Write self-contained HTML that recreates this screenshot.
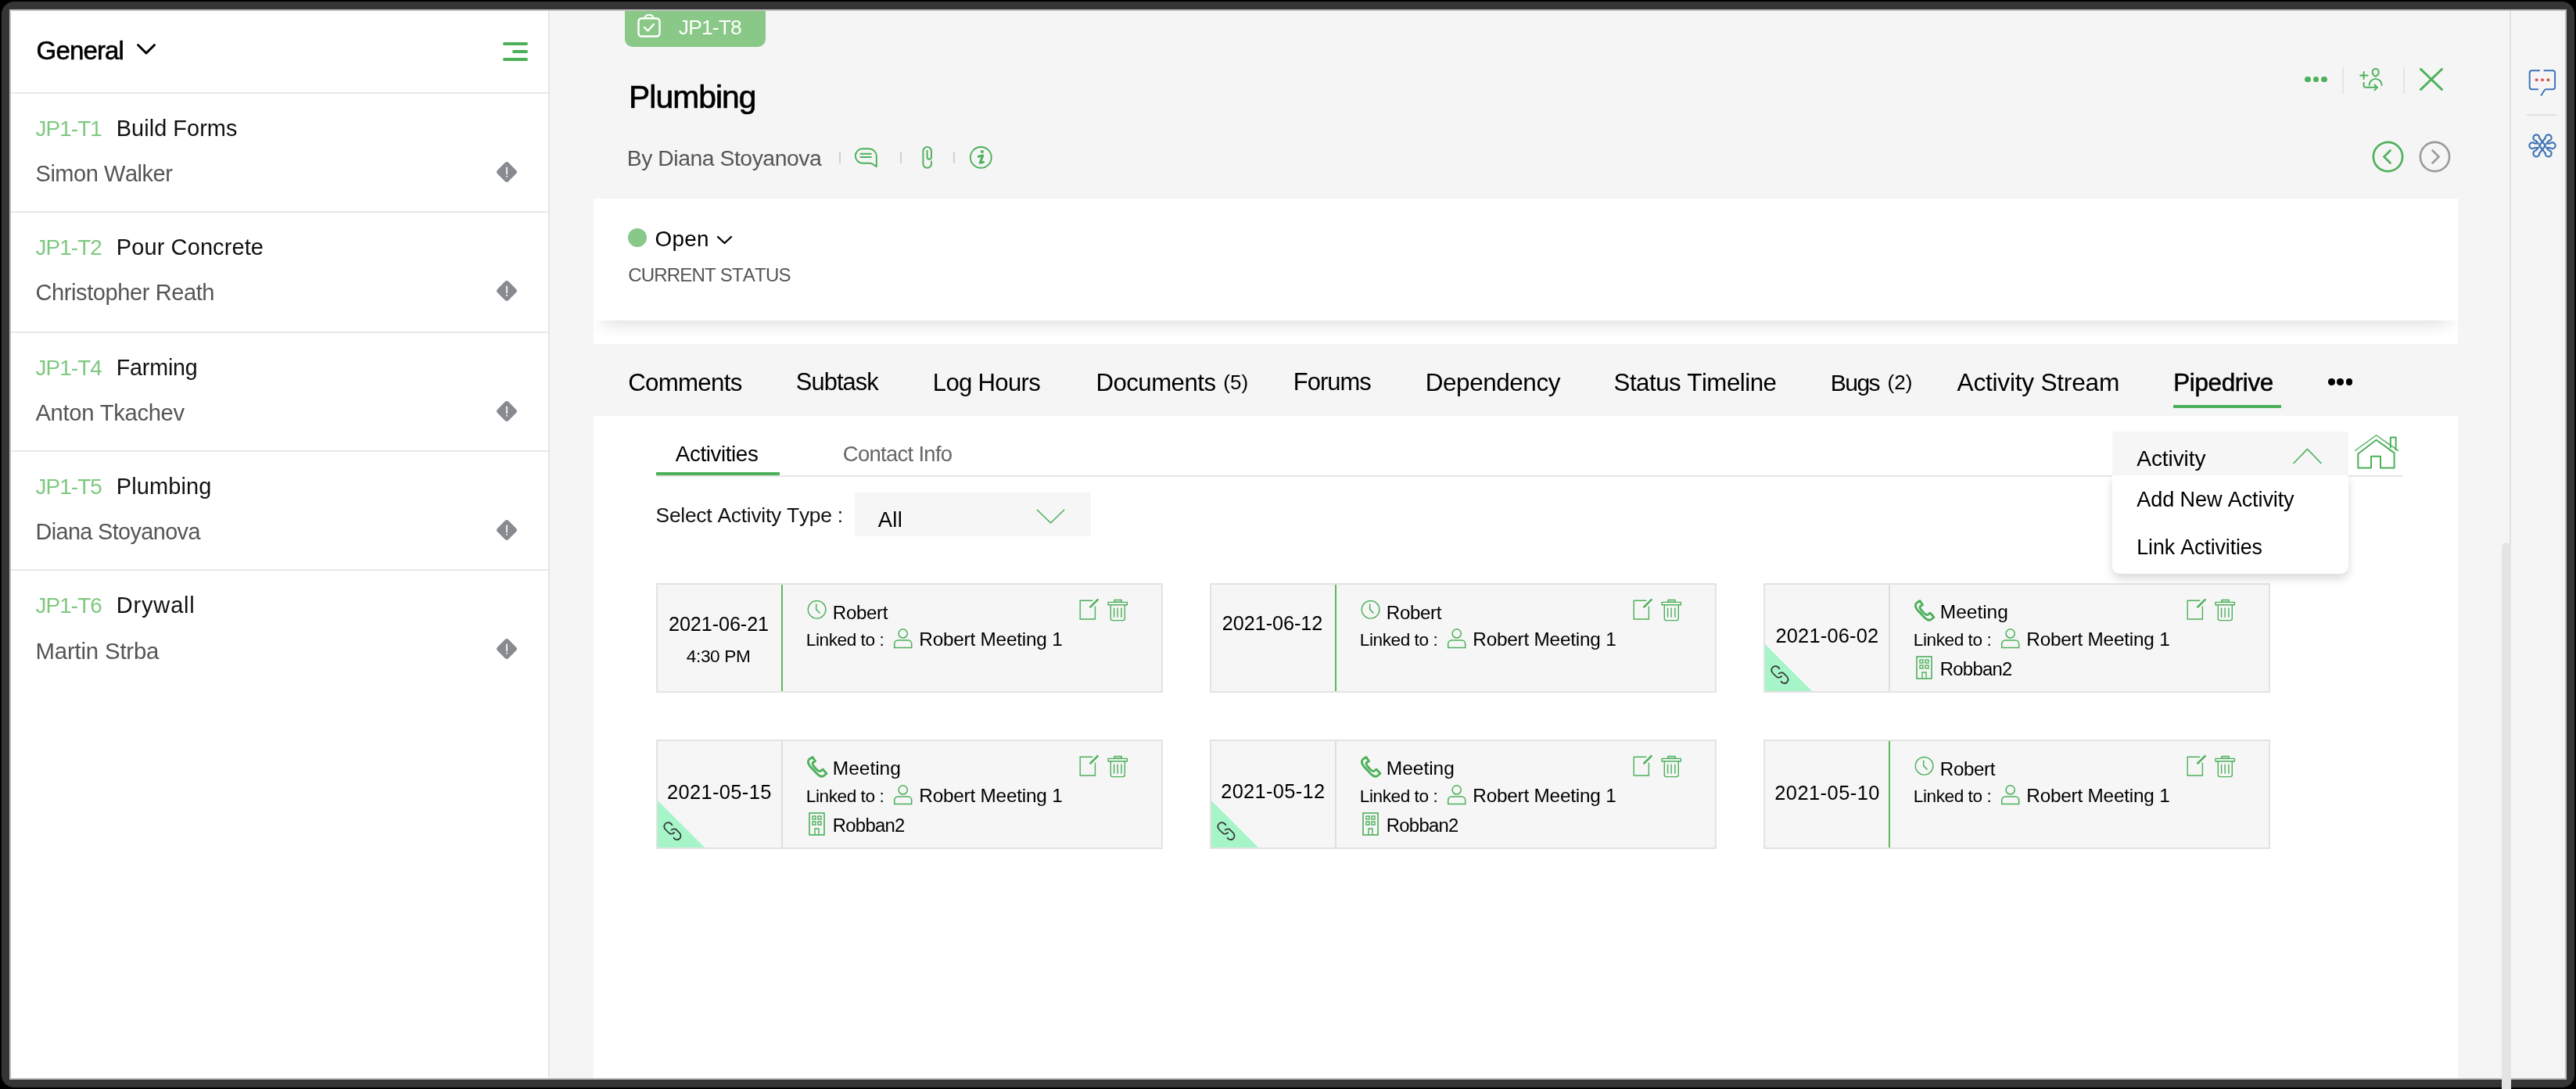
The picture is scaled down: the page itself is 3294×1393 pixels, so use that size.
<!DOCTYPE html>
<html><head><meta charset="utf-8"><style>
html,body{margin:0;padding:0;width:3294px;height:1393px;overflow:hidden;background:#000;}
body{position:relative;font-family:"Liberation Sans",sans-serif;}
.t{position:absolute;white-space:nowrap;font-kerning:none;font-family:"Liberation Sans",sans-serif;-webkit-font-smoothing:antialiased;}
#root{position:absolute;left:0;top:0;width:3294px;height:1393px;will-change:transform;}
svg{display:block}
</style></head><body><div id="root">
<div style="position:absolute;left:0;top:0;width:3294px;height:1393px;background:#000;"></div>
<div style="position:absolute;left:2px;top:2px;width:3290px;height:1389px;background:#353535;border-radius:16px;"></div>
<div style="position:absolute;left:12px;top:12px;width:3270px;height:1369px;background:#bfbfbf;"></div>
<div style="position:absolute;left:14px;top:14px;width:3266px;height:1365px;background:#f5f5f5;overflow:hidden;"></div>
<div style="position:absolute;left:14px;top:14px;width:687px;height:1365px;background:#fff;"></div>
<div style="position:absolute;left:701px;top:14px;width:2px;height:1365px;background:#e6e6e6;"></div>
<div style="position:absolute;left:14px;top:118px;width:687px;height:2px;background:#e8e8e8;"></div>
<div style="position:absolute;left:14px;top:270px;width:687px;height:2px;background:#e8e8e8;"></div>
<div style="position:absolute;left:14px;top:424px;width:687px;height:2px;background:#e8e8e8;"></div>
<div style="position:absolute;left:14px;top:576px;width:687px;height:2px;background:#e8e8e8;"></div>
<div style="position:absolute;left:14px;top:728px;width:687px;height:2px;background:#e8e8e8;"></div>
<div class="t" style="left:46.60px;top:47.62px;font-size:33.05px;line-height:33.05px;color:#000;letter-spacing:-0.883px;-webkit-text-stroke:0.6px #000;">General</div>
<svg style="position:absolute;left:175px;top:56px;overflow:visible" width="24" height="14" viewBox="0 0 24 14"><polyline points="1.5,1.5 12,12 22.5,1.5" fill="none" stroke="#000" stroke-width="3" stroke-linecap="round" stroke-linejoin="round"/></svg>
<div style="position:absolute;left:643px;top:53.8px;width:32px;height:4px;border-radius:2px;background:#4cb05a;"></div>
<div style="position:absolute;left:655px;top:63.900000000000006px;width:20px;height:4px;border-radius:2px;background:#4cb05a;"></div>
<div style="position:absolute;left:643px;top:73.8px;width:32px;height:4px;border-radius:2px;background:#4cb05a;"></div>
<div class="t" style="left:45.50px;top:150.64px;font-size:27.83px;line-height:27.83px;color:#7fc882;letter-spacing:-0.877px;">JP1-T1</div>
<div class="t" style="left:148.80px;top:149.71px;font-size:28.92px;line-height:28.92px;color:#111;letter-spacing:0.039px;">Build Forms</div>
<div class="t" style="left:45.50px;top:207.82px;font-size:29.03px;line-height:29.03px;color:#555;letter-spacing:-0.467px;">Simon Walker</div>
<svg style="position:absolute;left:635px;top:207.4px;overflow:visible" width="26" height="26" viewBox="0 0 26 26"><rect x="3" y="3" width="20" height="20" rx="3.2" transform="rotate(45 13 13)" fill="#878b8f"/><rect x="12.2" y="6.5" width="1.7" height="10" rx="0.8" fill="#fff"/><circle cx="13.05" cy="18.8" r="1" fill="#fff"/></svg>
<div class="t" style="left:45.50px;top:302.64px;font-size:27.83px;line-height:27.83px;color:#7fc882;letter-spacing:-0.877px;">JP1-T2</div>
<div class="t" style="left:148.80px;top:301.65px;font-size:29.00px;line-height:29.00px;color:#111;letter-spacing:0.101px;">Pour Concrete</div>
<div class="t" style="left:45.50px;top:359.79px;font-size:29.06px;line-height:29.06px;color:#555;letter-spacing:-0.421px;">Christopher Reath</div>
<svg style="position:absolute;left:635px;top:359.4px;overflow:visible" width="26" height="26" viewBox="0 0 26 26"><rect x="3" y="3" width="20" height="20" rx="3.2" transform="rotate(45 13 13)" fill="#878b8f"/><rect x="12.2" y="6.5" width="1.7" height="10" rx="0.8" fill="#fff"/><circle cx="13.05" cy="18.8" r="1" fill="#fff"/></svg>
<div class="t" style="left:45.50px;top:456.64px;font-size:27.83px;line-height:27.83px;color:#7fc882;letter-spacing:-0.877px;">JP1-T4</div>
<div class="t" style="left:148.80px;top:455.96px;font-size:28.63px;line-height:28.63px;color:#111;letter-spacing:-0.168px;">Farming</div>
<div class="t" style="left:45.50px;top:513.69px;font-size:29.19px;line-height:29.19px;color:#555;letter-spacing:-0.346px;">Anton Tkachev</div>
<svg style="position:absolute;left:635px;top:513.4px;overflow:visible" width="26" height="26" viewBox="0 0 26 26"><rect x="3" y="3" width="20" height="20" rx="3.2" transform="rotate(45 13 13)" fill="#878b8f"/><rect x="12.2" y="6.5" width="1.7" height="10" rx="0.8" fill="#fff"/><circle cx="13.05" cy="18.8" r="1" fill="#fff"/></svg>
<div class="t" style="left:45.50px;top:608.64px;font-size:27.83px;line-height:27.83px;color:#7fc882;letter-spacing:-0.877px;">JP1-T5</div>
<div class="t" style="left:148.80px;top:607.66px;font-size:28.98px;line-height:28.98px;color:#111;letter-spacing:0.126px;">Plumbing</div>
<div class="t" style="left:45.50px;top:665.98px;font-size:28.84px;line-height:28.84px;color:#555;letter-spacing:-0.618px;">Diana Stoyanova</div>
<svg style="position:absolute;left:635px;top:665.4px;overflow:visible" width="26" height="26" viewBox="0 0 26 26"><rect x="3" y="3" width="20" height="20" rx="3.2" transform="rotate(45 13 13)" fill="#878b8f"/><rect x="12.2" y="6.5" width="1.7" height="10" rx="0.8" fill="#fff"/><circle cx="13.05" cy="18.8" r="1" fill="#fff"/></svg>
<div class="t" style="left:45.50px;top:760.64px;font-size:27.83px;line-height:27.83px;color:#7fc882;letter-spacing:-0.877px;">JP1-T6</div>
<div class="t" style="left:148.80px;top:759.65px;font-size:29.00px;line-height:29.00px;color:#111;letter-spacing:0.823px;">Drywall</div>
<div class="t" style="left:45.50px;top:817.55px;font-size:29.35px;line-height:29.35px;color:#555;letter-spacing:-0.172px;">Martin Strba</div>
<svg style="position:absolute;left:635px;top:817.4px;overflow:visible" width="26" height="26" viewBox="0 0 26 26"><rect x="3" y="3" width="20" height="20" rx="3.2" transform="rotate(45 13 13)" fill="#878b8f"/><rect x="12.2" y="6.5" width="1.7" height="10" rx="0.8" fill="#fff"/><circle cx="13.05" cy="18.8" r="1" fill="#fff"/></svg>
<div style="position:absolute;left:799px;top:14px;width:180px;height:45.5px;background:#89c886;border-radius:0 0 10px 10px;"></div>
<svg style="position:absolute;left:815px;top:19px;overflow:visible" width="30" height="29" viewBox="0 0 30 29"><rect x="1.5" y="4.5" width="27" height="23" rx="4" fill="none" stroke="#fff" stroke-width="2.4"/><path d="M10 5 V3 a5 3 0 0 1 10 0 V5" fill="none" stroke="#fff" stroke-width="2.2"/><polyline points="9,16 13.5,20.5 21,12" fill="none" stroke="#fff" stroke-width="2.4" stroke-linecap="round" stroke-linejoin="round"/></svg>
<div class="t" style="left:867.80px;top:22.02px;font-size:26.44px;line-height:26.44px;color:#fff;letter-spacing:-0.841px;">JP1-T8</div>
<div class="t" style="left:804.10px;top:104.29px;font-size:40.75px;line-height:40.75px;color:#000;letter-spacing:-0.929px;-webkit-text-stroke:0.7px #000;">Plumbing</div>
<div class="t" style="left:801.80px;top:188.41px;font-size:28.34px;line-height:28.34px;color:#555;letter-spacing:-0.457px;">By Diana Stoyanova</div>
<div style="position:absolute;left:1073px;top:194px;width:2px;height:15px;background:#d0d0d0;"></div>
<div style="position:absolute;left:1151px;top:194px;width:2px;height:15px;background:#d0d0d0;"></div>
<div style="position:absolute;left:1219px;top:194px;width:2px;height:15px;background:#d0d0d0;"></div>
<svg style="position:absolute;left:1093px;top:189px;overflow:visible" width="30" height="27" viewBox="0 0 30 27"><path d="M10 1.3 H18.3 A9.5 9.5 0 0 1 27.8 10.8 V24.3 L22.8 20.7 Q21.3 19.7 18.8 19.7 H10 A9.2 9.2 0 0 1 10 1.3 Z" fill="none" stroke="#4cb05a" stroke-width="1.9" stroke-linejoin="round"/><line x1="7.4" y1="7.7" x2="20.8" y2="7.7" stroke="#4cb05a" stroke-width="2.1" stroke-linecap="round"/><line x1="7.4" y1="12" x2="20.8" y2="12" stroke="#4cb05a" stroke-width="2.1" stroke-linecap="round"/></svg>
<svg style="position:absolute;left:1178px;top:186px;overflow:visible" width="16" height="31" viewBox="0 0 16 31"><path d="M7.6 6.8 V15 A2.7 2.7 0 0 0 13 15 V7.2 A5.3 5.3 0 0 0 2.4 7.2 V23.5 A5.3 5.3 0 0 0 13 23.5 V20.4" fill="none" stroke="#4cb05a" stroke-width="1.9" stroke-linecap="round"/></svg>
<svg style="position:absolute;left:1240px;top:187px;overflow:visible" width="29" height="29" viewBox="0 0 29 29"><circle cx="14.3" cy="14.4" r="13.4" fill="none" stroke="#4cb05a" stroke-width="1.9"/><circle cx="15.9" cy="7" r="2.1" fill="#4cb05a"/><path d="M11.3 13.4 Q14 12 16.8 11.9 L13.2 21.3 Q15.5 21.2 17.6 20.2" fill="none" stroke="#4cb05a" stroke-width="2.9" stroke-linejoin="round" stroke-linecap="round"/></svg>
<div style="position:absolute;left:2947.0px;top:97.5px;width:7.5px;height:7.5px;border-radius:50%;background:#4cb05a;"></div>
<div style="position:absolute;left:2957.6px;top:97.5px;width:7.5px;height:7.5px;border-radius:50%;background:#4cb05a;"></div>
<div style="position:absolute;left:2968.2px;top:97.5px;width:7.5px;height:7.5px;border-radius:50%;background:#4cb05a;"></div>
<div style="position:absolute;left:2995px;top:86px;width:2px;height:34px;background:#e4e4e4;"></div>
<div style="position:absolute;left:3073px;top:86px;width:2px;height:34px;background:#e4e4e4;"></div>
<svg style="position:absolute;left:3017px;top:87px;overflow:visible" width="30" height="30" viewBox="0 0 30 30"><g fill="none" stroke="#4cb05a" stroke-width="1.9" stroke-linecap="round" stroke-linejoin="round"><line x1="1.1" y1="9.5" x2="10.6" y2="9.5"/><line x1="5.6" y1="5" x2="5.6" y2="14.1"/><path d="M20.7 1 C23.5 1 25 3 24.8 5.3 C24.6 7.8 22.5 10.5 20.7 10.7 C18.9 10.5 16.8 7.8 16.6 5.3 C16.4 3 17.9 1 20.7 1 Z"/><path d="M12.6 21.9 A8 8 0 0 1 28.7 21.9"/><path d="M5.6 18.6 V22.6 Q5.6 24.8 7.9 24.8 H22.8"/><polyline points="19.4,21.5 22.8,24.8 19.4,28.3"/></g></svg>
<svg style="position:absolute;left:3094px;top:87px;overflow:visible" width="30" height="29" viewBox="0 0 30 29"><g stroke="#4cb05a" stroke-width="3" stroke-linecap="round"><line x1="1.5" y1="1.5" x2="28.5" y2="27.5"/><line x1="28.5" y1="1.5" x2="1.5" y2="27.5"/></g></svg>
<svg style="position:absolute;left:3033px;top:180px;overflow:visible" width="41" height="41" viewBox="0 0 41 41"><circle cx="20.5" cy="20.5" r="18.6" fill="none" stroke="#4cb05a" stroke-width="2.6"/><polyline points="23.5,12.5 15.5,20.5 23.5,28.5" fill="none" stroke="#4cb05a" stroke-width="2.6" stroke-linecap="round"/></svg>
<svg style="position:absolute;left:3093px;top:180px;overflow:visible" width="41" height="41" viewBox="0 0 41 41"><circle cx="20.5" cy="20.5" r="18.6" fill="none" stroke="#9a9a9a" stroke-width="2.6"/><polyline points="17.5,12.5 25.5,20.5 17.5,28.5" fill="none" stroke="#9a9a9a" stroke-width="2.6" stroke-linecap="round"/></svg>
<div style="position:absolute;left:3209px;top:14px;width:2px;height:1365px;background:#e2e2e2;"></div>
<div style="position:absolute;left:3199px;top:694px;width:12px;height:700px;background:#e4e4e4;border-radius:6px 6px 0 0;"></div>
<svg style="position:absolute;left:3233px;top:89px;overflow:visible" width="36" height="34" viewBox="0 0 36 34"><g fill="none" stroke="#3f74b5" stroke-width="2" stroke-linecap="round" stroke-linejoin="round"><path d="M14.1 1.3 H4.7 Q1.7 1.3 1.7 4.3 V22.2 Q1.7 25.2 4.7 25.2 H12"/><path d="M20.5 1.3 H31.1 Q34.1 1.3 34.1 4.3 V22.2 Q34.1 25.2 31.1 25.2 H22.5 Q21.5 25.2 20.8 26.3 L16.6 32.7"/></g><circle cx="10.6" cy="13.2" r="1.9" fill="#dd4646"/><circle cx="18" cy="13.2" r="1.9" fill="#dd4646"/><circle cx="25.4" cy="13.2" r="1.9" fill="#dd4646"/></svg>
<div style="position:absolute;left:3231px;top:146px;width:38px;height:2px;background:#e0e0e0;"></div>
<svg style="position:absolute;left:3233px;top:171px;overflow:visible" width="36" height="31" viewBox="0 0 36 31"><defs><mask id="fa" maskUnits="userSpaceOnUse" x="-5" y="-5" width="46" height="41"><rect x="-5" y="-5" width="46" height="41" fill="black"/><circle cx="10.3" cy="5.2" r="5.0" fill="white"/><circle cx="10.3" cy="25.4" r="5.0" fill="white"/><circle cx="5.3" cy="15.3" r="5.0" fill="white"/><polyline points="10.3,5.2 18.4,15.3 10.3,25.4" fill="none" stroke="white" stroke-width="7.8" stroke-linejoin="miter"/><line x1="5.3" y1="15.3" x2="14" y2="15.3" stroke="white" stroke-width="7.8"/><circle cx="10.3" cy="5.2" r="2.8" fill="black"/><circle cx="10.3" cy="25.4" r="2.8" fill="black"/><circle cx="5.3" cy="15.3" r="2.8" fill="black"/><polyline points="10.3,5.2 18.4,15.3 10.3,25.4" fill="none" stroke="black" stroke-width="3.4" stroke-linejoin="miter"/><line x1="5.3" y1="15.3" x2="14" y2="15.3" stroke="black" stroke-width="3.4"/></mask><mask id="fb" maskUnits="userSpaceOnUse" x="-5" y="-5" width="46" height="41"><rect x="-5" y="-5" width="46" height="41" fill="black"/><g transform="translate(36,0) scale(-1,1)"><circle cx="10.3" cy="5.2" r="5.0" fill="white"/><circle cx="10.3" cy="25.4" r="5.0" fill="white"/><circle cx="5.3" cy="15.3" r="5.0" fill="white"/><polyline points="10.3,5.2 18.4,15.3 10.3,25.4" fill="none" stroke="white" stroke-width="7.8" stroke-linejoin="miter"/><line x1="5.3" y1="15.3" x2="14" y2="15.3" stroke="white" stroke-width="7.8"/><circle cx="10.3" cy="5.2" r="2.8" fill="black"/><circle cx="10.3" cy="25.4" r="2.8" fill="black"/><circle cx="5.3" cy="15.3" r="2.8" fill="black"/><polyline points="10.3,5.2 18.4,15.3 10.3,25.4" fill="none" stroke="black" stroke-width="3.4" stroke-linejoin="miter"/><line x1="5.3" y1="15.3" x2="14" y2="15.3" stroke="black" stroke-width="3.4"/></g></mask></defs><rect x="-5" y="-5" width="46" height="41" fill="#3f74b5" mask="url(#fa)"/><rect x="-5" y="-5" width="46" height="41" fill="#3f74b5" mask="url(#fb)"/></svg>
<div style="position:absolute;left:759px;top:254px;width:2384px;height:186px;background:#fff;overflow:hidden;"><div style="position:absolute;left:0;top:0;width:2384px;height:156px;background:#fff;box-shadow:0 14px 22px -12px rgba(0,0,0,0.16);"></div></div>
<div style="position:absolute;left:815px;top:292px;width:24px;height:24px;border-radius:50%;background:#88c98a;transform:translate(-12px,0);"></div>
<div class="t" style="left:837.60px;top:292.33px;font-size:27.83px;line-height:27.83px;color:#000;letter-spacing:0.306px;">Open</div>
<svg style="position:absolute;left:916px;top:301px;overflow:visible" width="21" height="12" viewBox="0 0 21 12"><polyline points="2,2 10.5,10 19,2" fill="none" stroke="#000" stroke-width="2.3" stroke-linecap="round" stroke-linejoin="round"/></svg>
<div class="t" style="left:803.20px;top:339.92px;font-size:24.07px;line-height:24.07px;color:#555;letter-spacing:-0.839px;">CURRENT STATUS</div>
<div class="t" style="left:803.20px;top:473.91px;font-size:31.28px;line-height:31.28px;color:#000;letter-spacing:-0.720px;">Comments</div>
<div class="t" style="left:1017.80px;top:474.27px;font-size:30.87px;line-height:30.87px;color:#000;letter-spacing:-0.930px;">Subtask</div>
<div class="t" style="left:1192.80px;top:474.03px;font-size:31.14px;line-height:31.14px;color:#000;letter-spacing:-0.710px;">Log Hours</div>
<div class="t" style="left:1401.40px;top:474.00px;font-size:31.18px;line-height:31.18px;color:#000;letter-spacing:-0.501px;">Documents</div>
<div class="t" style="left:1564.30px;top:475.89px;font-size:26.00px;line-height:26.00px;color:#000;">(5)</div>
<div class="t" style="left:1653.80px;top:474.21px;font-size:30.94px;line-height:30.94px;color:#000;letter-spacing:-0.969px;">Forums</div>
<div class="t" style="left:1822.80px;top:473.73px;font-size:31.50px;line-height:31.50px;color:#000;letter-spacing:-0.475px;">Dependency</div>
<div class="t" style="left:2063.60px;top:473.90px;font-size:31.30px;line-height:31.30px;color:#000;letter-spacing:-0.526px;">Status Timeline</div>
<div class="t" style="left:2340.80px;top:474.86px;font-size:30.16px;line-height:30.16px;color:#000;letter-spacing:-1.613px;">Bugs</div>
<div class="t" style="left:2413.60px;top:475.89px;font-size:26.00px;line-height:26.00px;color:#000;">(2)</div>
<div class="t" style="left:2502.50px;top:473.57px;font-size:31.69px;line-height:31.69px;color:#000;letter-spacing:-0.249px;">Activity Stream</div>
<div class="t" style="left:2779.20px;top:473.75px;font-size:31.48px;line-height:31.48px;color:#000;letter-spacing:-0.380px;-webkit-text-stroke:0.5px #000;">Pipedrive</div>
<div style="position:absolute;left:2779px;top:518px;width:138px;height:4px;background:#4cb05a;"></div>
<div style="position:absolute;left:2977.0px;top:484px;width:8.5px;height:8.5px;border-radius:50%;background:#000;"></div>
<div style="position:absolute;left:2988.3px;top:484px;width:8.5px;height:8.5px;border-radius:50%;background:#000;"></div>
<div style="position:absolute;left:2999.6px;top:484px;width:8.5px;height:8.5px;border-radius:50%;background:#000;"></div>
<div style="position:absolute;left:759px;top:532px;width:2384px;height:847px;background:#fff;"></div>
<div style="position:absolute;left:839px;top:608px;width:2234px;height:2px;background:#e6e6e6;"></div>
<div style="position:absolute;left:839px;top:603.6px;width:158px;height:4px;background:#4cb05a;"></div>
<div class="t" style="left:863.80px;top:566.88px;font-size:27.77px;line-height:27.77px;color:#000;letter-spacing:-0.396px;">Activities</div>
<div class="t" style="left:1077.80px;top:567.16px;font-size:27.45px;line-height:27.45px;color:#666;letter-spacing:-0.693px;">Contact Info</div>
<div class="t" style="left:838.60px;top:645.86px;font-size:26.39px;line-height:26.39px;color:#111;letter-spacing:-0.252px;">Select Activity Type :</div>
<div style="position:absolute;left:1093px;top:630px;width:302px;height:56px;background:#f6f6f6;"></div>
<div class="t" style="left:1122.80px;top:650.58px;font-size:27.43px;line-height:27.43px;color:#000;letter-spacing:0.264px;">All</div>
<svg style="position:absolute;left:1325px;top:651px;overflow:visible" width="37" height="19" viewBox="0 0 37 19"><polyline points="1,1 18.5,18 36,1" fill="none" stroke="#4cb05a" stroke-width="1.6"/></svg>
<div style="position:absolute;left:839px;top:746px;width:644px;height:136px;background:#f6f6f6;border:2px solid #e3e3e3;"></div>
<div style="position:absolute;left:999px;top:748px;width:2px;height:136px;background:#5cb85c;"></div>
<div class="t" style="left:855.00px;top:785.57px;font-size:25.19px;line-height:25.19px;color:#000;letter-spacing:-0.086px;">2021-06-21</div>
<div class="t" style="left:877.80px;top:827.51px;font-size:22.66px;line-height:22.66px;color:#000;letter-spacing:-0.397px;">4:30 PM</div>
<svg style="position:absolute;left:1032px;top:767px;overflow:visible" width="26" height="26" viewBox="0 0 26 26"><circle cx="12.6" cy="12.8" r="11.3" fill="none" stroke="#4cb05a" stroke-width="1.45"/><polyline points="11.7,5.6 11.7,12.6 16.6,17.6" fill="none" stroke="#4cb05a" stroke-width="1.5"/></svg>
<div class="t" style="left:1064.80px;top:771.79px;font-size:24.11px;line-height:24.11px;color:#000;letter-spacing:-0.329px;">Robert</div>
<div class="t" style="left:1030.80px;top:807.56px;font-size:22.61px;line-height:22.61px;color:#000;letter-spacing:-0.442px;">Linked to :</div>
<svg style="position:absolute;left:1143px;top:804px;overflow:visible" width="25" height="26" viewBox="0 0 25 26"><circle cx="11.7" cy="6.4" r="5.6" fill="none" stroke="#4cb05a" stroke-width="1.5"/><path d="M0.7 24.6 V19.5 a4.6 4.6 0 0 1 4.6 -4.6 H18.1 a4.6 4.6 0 0 1 4.6 4.6 V24.6 Z" fill="none" stroke="#4cb05a" stroke-width="1.5"/></svg>
<div class="t" style="left:1175.30px;top:806.09px;font-size:24.34px;line-height:24.34px;color:#000;letter-spacing:-0.215px;">Robert Meeting 1</div>
<svg style="position:absolute;left:1380px;top:764px;overflow:visible" width="27" height="30" viewBox="0 0 27 30"><path d="M17.3 4.2 H1.2 V28 H20.4 V11.5" fill="none" stroke="#4cb05a" stroke-width="1.4"/><line x1="13.6" y1="13.2" x2="24.4" y2="2.3" stroke="#4cb05a" stroke-width="2.5"/></svg>
<svg style="position:absolute;left:1416px;top:766px;overflow:visible" width="27" height="29" viewBox="0 0 27 29"><g fill="none" stroke="#4cb05a" stroke-width="1.4" stroke-linejoin="round"><rect x="8.9" y="1.5" width="9.3" height="2.8"/><rect x="1.0" y="4.4" width="24.4" height="3.4"/><path d="M4.3 7.8 V25 a2.6 2.6 0 0 0 2.6 2.6 H19.7 a2.6 2.6 0 0 0 2.6 -2.6 V7.8"/><line x1="8.6" y1="11.5" x2="8.6" y2="23.7"/><line x1="13.1" y1="11.5" x2="13.1" y2="23.7"/><line x1="17.9" y1="11.5" x2="17.9" y2="23.7"/></g></svg>
<div style="position:absolute;left:1547px;top:746px;width:644px;height:136px;background:#f6f6f6;border:2px solid #e3e3e3;"></div>
<div style="position:absolute;left:1707px;top:748px;width:2px;height:136px;background:#5cb85c;"></div>
<div class="t" style="left:1562.80px;top:785.45px;font-size:25.22px;line-height:25.22px;color:#000;letter-spacing:-0.066px;">2021-06-12</div>
<svg style="position:absolute;left:1740px;top:767px;overflow:visible" width="26" height="26" viewBox="0 0 26 26"><circle cx="12.6" cy="12.8" r="11.3" fill="none" stroke="#4cb05a" stroke-width="1.45"/><polyline points="11.7,5.6 11.7,12.6 16.6,17.6" fill="none" stroke="#4cb05a" stroke-width="1.5"/></svg>
<div class="t" style="left:1772.80px;top:771.79px;font-size:24.11px;line-height:24.11px;color:#000;letter-spacing:-0.329px;">Robert</div>
<div class="t" style="left:1738.80px;top:807.56px;font-size:22.61px;line-height:22.61px;color:#000;letter-spacing:-0.442px;">Linked to :</div>
<svg style="position:absolute;left:1851px;top:804px;overflow:visible" width="25" height="26" viewBox="0 0 25 26"><circle cx="11.7" cy="6.4" r="5.6" fill="none" stroke="#4cb05a" stroke-width="1.5"/><path d="M0.7 24.6 V19.5 a4.6 4.6 0 0 1 4.6 -4.6 H18.1 a4.6 4.6 0 0 1 4.6 4.6 V24.6 Z" fill="none" stroke="#4cb05a" stroke-width="1.5"/></svg>
<div class="t" style="left:1883.30px;top:806.09px;font-size:24.34px;line-height:24.34px;color:#000;letter-spacing:-0.215px;">Robert Meeting 1</div>
<svg style="position:absolute;left:2088px;top:764px;overflow:visible" width="27" height="30" viewBox="0 0 27 30"><path d="M17.3 4.2 H1.2 V28 H20.4 V11.5" fill="none" stroke="#4cb05a" stroke-width="1.4"/><line x1="13.6" y1="13.2" x2="24.4" y2="2.3" stroke="#4cb05a" stroke-width="2.5"/></svg>
<svg style="position:absolute;left:2124px;top:766px;overflow:visible" width="27" height="29" viewBox="0 0 27 29"><g fill="none" stroke="#4cb05a" stroke-width="1.4" stroke-linejoin="round"><rect x="8.9" y="1.5" width="9.3" height="2.8"/><rect x="1.0" y="4.4" width="24.4" height="3.4"/><path d="M4.3 7.8 V25 a2.6 2.6 0 0 0 2.6 2.6 H19.7 a2.6 2.6 0 0 0 2.6 -2.6 V7.8"/><line x1="8.6" y1="11.5" x2="8.6" y2="23.7"/><line x1="13.1" y1="11.5" x2="13.1" y2="23.7"/><line x1="17.9" y1="11.5" x2="17.9" y2="23.7"/></g></svg>
<div style="position:absolute;left:2255px;top:746px;width:644px;height:136px;background:#f6f6f6;border:2px solid #e3e3e3;"></div>
<svg style="position:absolute;left:2257px;top:824px;overflow:visible" width="60" height="60" viewBox="0 0 60 60"><polygon points="0,0 60,60 0,60" fill="#a6f5c8"/></svg>
<svg style="position:absolute;left:2255px;top:840px;overflow:visible" width="36" height="36" viewBox="0 0 36 36"><g fill="none" stroke="#333" stroke-width="1.7" stroke-linecap="round"><path d="M20.4 15.3 C19 13 17 12.2 15.5 12.2 C12 12.2 10 15 10.3 17.8 C10.5 19.5 11.5 20.8 12.8 22 L17.5 26.3 C19.5 27.3 21.5 26.5 23.2 25"/><path d="M19.6 21.6 C21 20.4 23 20 25 20.6 L30.5 26 C32.5 28.8 31.3 32.5 28.8 33.6 C26.3 34.7 23.7 33.5 22.6 31.7"/></g></svg>
<div style="position:absolute;left:2415px;top:748px;width:2px;height:136px;background:#dedede;"></div>
<div class="t" style="left:2270.40px;top:801.17px;font-size:25.43px;line-height:25.43px;color:#000;letter-spacing:0.193px;">2021-06-02</div>
<svg style="position:absolute;left:2448px;top:766px;overflow:visible" width="27" height="29" viewBox="0 0 27 29"><path d="M7 2.5 L3 5 C0.5 7 1.5 11 4 14.5 L13 24 C16 27 19.5 28 22 26 L25 23.5 L20 18 L17 20.5 C15.5 21 13.5 19.5 11 17 L8.5 14 C7 12 6.5 10.5 7.5 9.5 L10.5 7.5 Z" fill="none" stroke="#4cb05a" stroke-width="2.8" stroke-linejoin="round"/></svg>
<div class="t" style="left:2480.80px;top:771.46px;font-size:24.50px;line-height:24.50px;color:#000;letter-spacing:-0.026px;">Meeting</div>
<div class="t" style="left:2446.80px;top:807.56px;font-size:22.61px;line-height:22.61px;color:#000;letter-spacing:-0.442px;">Linked to :</div>
<svg style="position:absolute;left:2559px;top:804px;overflow:visible" width="25" height="26" viewBox="0 0 25 26"><circle cx="11.7" cy="6.4" r="5.6" fill="none" stroke="#4cb05a" stroke-width="1.5"/><path d="M0.7 24.6 V19.5 a4.6 4.6 0 0 1 4.6 -4.6 H18.1 a4.6 4.6 0 0 1 4.6 4.6 V24.6 Z" fill="none" stroke="#4cb05a" stroke-width="1.5"/></svg>
<div class="t" style="left:2591.30px;top:806.09px;font-size:24.34px;line-height:24.34px;color:#000;letter-spacing:-0.215px;">Robert Meeting 1</div>
<svg style="position:absolute;left:2450px;top:839px;overflow:visible" width="21" height="30" viewBox="0 0 21 30"><rect x="1" y="1" width="19" height="28" fill="none" stroke="#4cb05a" stroke-width="1.6"/><g fill="none" stroke="#4cb05a" stroke-width="1.4"><rect x="5" y="5" width="4" height="4"/><rect x="12" y="5" width="4" height="4"/><rect x="5" y="12" width="4" height="4"/><rect x="12" y="12" width="4" height="4"/><path d="M8 29 V21 H13 V29"/></g></svg>
<div class="t" style="left:2480.80px;top:844.23px;font-size:23.82px;line-height:23.82px;color:#000;letter-spacing:-0.699px;">Robban2</div>
<svg style="position:absolute;left:2796px;top:764px;overflow:visible" width="27" height="30" viewBox="0 0 27 30"><path d="M17.3 4.2 H1.2 V28 H20.4 V11.5" fill="none" stroke="#4cb05a" stroke-width="1.4"/><line x1="13.6" y1="13.2" x2="24.4" y2="2.3" stroke="#4cb05a" stroke-width="2.5"/></svg>
<svg style="position:absolute;left:2832px;top:766px;overflow:visible" width="27" height="29" viewBox="0 0 27 29"><g fill="none" stroke="#4cb05a" stroke-width="1.4" stroke-linejoin="round"><rect x="8.9" y="1.5" width="9.3" height="2.8"/><rect x="1.0" y="4.4" width="24.4" height="3.4"/><path d="M4.3 7.8 V25 a2.6 2.6 0 0 0 2.6 2.6 H19.7 a2.6 2.6 0 0 0 2.6 -2.6 V7.8"/><line x1="8.6" y1="11.5" x2="8.6" y2="23.7"/><line x1="13.1" y1="11.5" x2="13.1" y2="23.7"/><line x1="17.9" y1="11.5" x2="17.9" y2="23.7"/></g></svg>
<div style="position:absolute;left:839px;top:946px;width:644px;height:136px;background:#f6f6f6;border:2px solid #e3e3e3;"></div>
<svg style="position:absolute;left:841px;top:1024px;overflow:visible" width="60" height="60" viewBox="0 0 60 60"><polygon points="0,0 60,60 0,60" fill="#a6f5c8"/></svg>
<svg style="position:absolute;left:839px;top:1040px;overflow:visible" width="36" height="36" viewBox="0 0 36 36"><g fill="none" stroke="#333" stroke-width="1.7" stroke-linecap="round"><path d="M20.4 15.3 C19 13 17 12.2 15.5 12.2 C12 12.2 10 15 10.3 17.8 C10.5 19.5 11.5 20.8 12.8 22 L17.5 26.3 C19.5 27.3 21.5 26.5 23.2 25"/><path d="M19.6 21.6 C21 20.4 23 20 25 20.6 L30.5 26 C32.5 28.8 31.3 32.5 28.8 33.6 C26.3 34.7 23.7 33.5 22.6 31.7"/></g></svg>
<div style="position:absolute;left:999px;top:948px;width:2px;height:136px;background:#dedede;"></div>
<div class="t" style="left:853.00px;top:1000.87px;font-size:25.43px;line-height:25.43px;color:#000;letter-spacing:0.359px;">2021-05-15</div>
<svg style="position:absolute;left:1032px;top:966px;overflow:visible" width="27" height="29" viewBox="0 0 27 29"><path d="M7 2.5 L3 5 C0.5 7 1.5 11 4 14.5 L13 24 C16 27 19.5 28 22 26 L25 23.5 L20 18 L17 20.5 C15.5 21 13.5 19.5 11 17 L8.5 14 C7 12 6.5 10.5 7.5 9.5 L10.5 7.5 Z" fill="none" stroke="#4cb05a" stroke-width="2.8" stroke-linejoin="round"/></svg>
<div class="t" style="left:1064.80px;top:971.46px;font-size:24.50px;line-height:24.50px;color:#000;letter-spacing:-0.026px;">Meeting</div>
<div class="t" style="left:1030.80px;top:1007.56px;font-size:22.61px;line-height:22.61px;color:#000;letter-spacing:-0.442px;">Linked to :</div>
<svg style="position:absolute;left:1143px;top:1004px;overflow:visible" width="25" height="26" viewBox="0 0 25 26"><circle cx="11.7" cy="6.4" r="5.6" fill="none" stroke="#4cb05a" stroke-width="1.5"/><path d="M0.7 24.6 V19.5 a4.6 4.6 0 0 1 4.6 -4.6 H18.1 a4.6 4.6 0 0 1 4.6 4.6 V24.6 Z" fill="none" stroke="#4cb05a" stroke-width="1.5"/></svg>
<div class="t" style="left:1175.30px;top:1006.09px;font-size:24.34px;line-height:24.34px;color:#000;letter-spacing:-0.215px;">Robert Meeting 1</div>
<svg style="position:absolute;left:1034px;top:1039px;overflow:visible" width="21" height="30" viewBox="0 0 21 30"><rect x="1" y="1" width="19" height="28" fill="none" stroke="#4cb05a" stroke-width="1.6"/><g fill="none" stroke="#4cb05a" stroke-width="1.4"><rect x="5" y="5" width="4" height="4"/><rect x="12" y="5" width="4" height="4"/><rect x="5" y="12" width="4" height="4"/><rect x="12" y="12" width="4" height="4"/><path d="M8 29 V21 H13 V29"/></g></svg>
<div class="t" style="left:1064.80px;top:1044.23px;font-size:23.82px;line-height:23.82px;color:#000;letter-spacing:-0.699px;">Robban2</div>
<svg style="position:absolute;left:1380px;top:964px;overflow:visible" width="27" height="30" viewBox="0 0 27 30"><path d="M17.3 4.2 H1.2 V28 H20.4 V11.5" fill="none" stroke="#4cb05a" stroke-width="1.4"/><line x1="13.6" y1="13.2" x2="24.4" y2="2.3" stroke="#4cb05a" stroke-width="2.5"/></svg>
<svg style="position:absolute;left:1416px;top:966px;overflow:visible" width="27" height="29" viewBox="0 0 27 29"><g fill="none" stroke="#4cb05a" stroke-width="1.4" stroke-linejoin="round"><rect x="8.9" y="1.5" width="9.3" height="2.8"/><rect x="1.0" y="4.4" width="24.4" height="3.4"/><path d="M4.3 7.8 V25 a2.6 2.6 0 0 0 2.6 2.6 H19.7 a2.6 2.6 0 0 0 2.6 -2.6 V7.8"/><line x1="8.6" y1="11.5" x2="8.6" y2="23.7"/><line x1="13.1" y1="11.5" x2="13.1" y2="23.7"/><line x1="17.9" y1="11.5" x2="17.9" y2="23.7"/></g></svg>
<div style="position:absolute;left:1547px;top:946px;width:644px;height:136px;background:#f6f6f6;border:2px solid #e3e3e3;"></div>
<svg style="position:absolute;left:1549px;top:1024px;overflow:visible" width="60" height="60" viewBox="0 0 60 60"><polygon points="0,0 60,60 0,60" fill="#a6f5c8"/></svg>
<svg style="position:absolute;left:1547px;top:1040px;overflow:visible" width="36" height="36" viewBox="0 0 36 36"><g fill="none" stroke="#333" stroke-width="1.7" stroke-linecap="round"><path d="M20.4 15.3 C19 13 17 12.2 15.5 12.2 C12 12.2 10 15 10.3 17.8 C10.5 19.5 11.5 20.8 12.8 22 L17.5 26.3 C19.5 27.3 21.5 26.5 23.2 25"/><path d="M19.6 21.6 C21 20.4 23 20 25 20.6 L30.5 26 C32.5 28.8 31.3 32.5 28.8 33.6 C26.3 34.7 23.7 33.5 22.6 31.7"/></g></svg>
<div style="position:absolute;left:1707px;top:948px;width:2px;height:136px;background:#dedede;"></div>
<div class="t" style="left:1561.20px;top:1000.47px;font-size:25.43px;line-height:25.43px;color:#000;letter-spacing:0.326px;">2021-05-12</div>
<svg style="position:absolute;left:1740px;top:966px;overflow:visible" width="27" height="29" viewBox="0 0 27 29"><path d="M7 2.5 L3 5 C0.5 7 1.5 11 4 14.5 L13 24 C16 27 19.5 28 22 26 L25 23.5 L20 18 L17 20.5 C15.5 21 13.5 19.5 11 17 L8.5 14 C7 12 6.5 10.5 7.5 9.5 L10.5 7.5 Z" fill="none" stroke="#4cb05a" stroke-width="2.8" stroke-linejoin="round"/></svg>
<div class="t" style="left:1772.80px;top:971.46px;font-size:24.50px;line-height:24.50px;color:#000;letter-spacing:-0.026px;">Meeting</div>
<div class="t" style="left:1738.80px;top:1007.56px;font-size:22.61px;line-height:22.61px;color:#000;letter-spacing:-0.442px;">Linked to :</div>
<svg style="position:absolute;left:1851px;top:1004px;overflow:visible" width="25" height="26" viewBox="0 0 25 26"><circle cx="11.7" cy="6.4" r="5.6" fill="none" stroke="#4cb05a" stroke-width="1.5"/><path d="M0.7 24.6 V19.5 a4.6 4.6 0 0 1 4.6 -4.6 H18.1 a4.6 4.6 0 0 1 4.6 4.6 V24.6 Z" fill="none" stroke="#4cb05a" stroke-width="1.5"/></svg>
<div class="t" style="left:1883.30px;top:1006.09px;font-size:24.34px;line-height:24.34px;color:#000;letter-spacing:-0.215px;">Robert Meeting 1</div>
<svg style="position:absolute;left:1742px;top:1039px;overflow:visible" width="21" height="30" viewBox="0 0 21 30"><rect x="1" y="1" width="19" height="28" fill="none" stroke="#4cb05a" stroke-width="1.6"/><g fill="none" stroke="#4cb05a" stroke-width="1.4"><rect x="5" y="5" width="4" height="4"/><rect x="12" y="5" width="4" height="4"/><rect x="5" y="12" width="4" height="4"/><rect x="12" y="12" width="4" height="4"/><path d="M8 29 V21 H13 V29"/></g></svg>
<div class="t" style="left:1772.80px;top:1044.23px;font-size:23.82px;line-height:23.82px;color:#000;letter-spacing:-0.699px;">Robban2</div>
<svg style="position:absolute;left:2088px;top:964px;overflow:visible" width="27" height="30" viewBox="0 0 27 30"><path d="M17.3 4.2 H1.2 V28 H20.4 V11.5" fill="none" stroke="#4cb05a" stroke-width="1.4"/><line x1="13.6" y1="13.2" x2="24.4" y2="2.3" stroke="#4cb05a" stroke-width="2.5"/></svg>
<svg style="position:absolute;left:2124px;top:966px;overflow:visible" width="27" height="29" viewBox="0 0 27 29"><g fill="none" stroke="#4cb05a" stroke-width="1.4" stroke-linejoin="round"><rect x="8.9" y="1.5" width="9.3" height="2.8"/><rect x="1.0" y="4.4" width="24.4" height="3.4"/><path d="M4.3 7.8 V25 a2.6 2.6 0 0 0 2.6 2.6 H19.7 a2.6 2.6 0 0 0 2.6 -2.6 V7.8"/><line x1="8.6" y1="11.5" x2="8.6" y2="23.7"/><line x1="13.1" y1="11.5" x2="13.1" y2="23.7"/><line x1="17.9" y1="11.5" x2="17.9" y2="23.7"/></g></svg>
<div style="position:absolute;left:2255px;top:946px;width:644px;height:136px;background:#f6f6f6;border:2px solid #e3e3e3;"></div>
<div style="position:absolute;left:2415px;top:948px;width:2px;height:136px;background:#5cb85c;"></div>
<div class="t" style="left:2269.20px;top:1002.07px;font-size:25.43px;line-height:25.43px;color:#000;letter-spacing:0.470px;">2021-05-10</div>
<svg style="position:absolute;left:2448px;top:967px;overflow:visible" width="26" height="26" viewBox="0 0 26 26"><circle cx="12.6" cy="12.8" r="11.3" fill="none" stroke="#4cb05a" stroke-width="1.45"/><polyline points="11.7,5.6 11.7,12.6 16.6,17.6" fill="none" stroke="#4cb05a" stroke-width="1.5"/></svg>
<div class="t" style="left:2480.80px;top:971.79px;font-size:24.11px;line-height:24.11px;color:#000;letter-spacing:-0.329px;">Robert</div>
<div class="t" style="left:2446.80px;top:1007.56px;font-size:22.61px;line-height:22.61px;color:#000;letter-spacing:-0.442px;">Linked to :</div>
<svg style="position:absolute;left:2559px;top:1004px;overflow:visible" width="25" height="26" viewBox="0 0 25 26"><circle cx="11.7" cy="6.4" r="5.6" fill="none" stroke="#4cb05a" stroke-width="1.5"/><path d="M0.7 24.6 V19.5 a4.6 4.6 0 0 1 4.6 -4.6 H18.1 a4.6 4.6 0 0 1 4.6 4.6 V24.6 Z" fill="none" stroke="#4cb05a" stroke-width="1.5"/></svg>
<div class="t" style="left:2591.30px;top:1006.09px;font-size:24.34px;line-height:24.34px;color:#000;letter-spacing:-0.215px;">Robert Meeting 1</div>
<svg style="position:absolute;left:2796px;top:964px;overflow:visible" width="27" height="30" viewBox="0 0 27 30"><path d="M17.3 4.2 H1.2 V28 H20.4 V11.5" fill="none" stroke="#4cb05a" stroke-width="1.4"/><line x1="13.6" y1="13.2" x2="24.4" y2="2.3" stroke="#4cb05a" stroke-width="2.5"/></svg>
<svg style="position:absolute;left:2832px;top:966px;overflow:visible" width="27" height="29" viewBox="0 0 27 29"><g fill="none" stroke="#4cb05a" stroke-width="1.4" stroke-linejoin="round"><rect x="8.9" y="1.5" width="9.3" height="2.8"/><rect x="1.0" y="4.4" width="24.4" height="3.4"/><path d="M4.3 7.8 V25 a2.6 2.6 0 0 0 2.6 2.6 H19.7 a2.6 2.6 0 0 0 2.6 -2.6 V7.8"/><line x1="8.6" y1="11.5" x2="8.6" y2="23.7"/><line x1="13.1" y1="11.5" x2="13.1" y2="23.7"/><line x1="17.9" y1="11.5" x2="17.9" y2="23.7"/></g></svg>
<div style="position:absolute;left:2701px;top:608px;width:302px;height:125.5px;background:#fff;border-radius:0 0 10px 10px;box-shadow:0 6px 12px rgba(0,0,0,0.15);"></div>
<div style="position:absolute;left:2701px;top:552px;width:302px;height:56px;background:#f6f6f6;"></div>
<div class="t" style="left:2732.30px;top:572.56px;font-size:28.15px;line-height:28.15px;color:#000;letter-spacing:-0.137px;">Activity</div>
<svg style="position:absolute;left:2932px;top:573px;overflow:visible" width="37" height="21" viewBox="0 0 37 21"><polyline points="0.5,20 18.5,1.5 36.5,20" fill="none" stroke="#4cb05a" stroke-width="1.6"/></svg>
<svg style="position:absolute;left:3011px;top:555px;overflow:visible" width="57" height="45" viewBox="0 0 57 45"><g fill="none" stroke="#4cb05a" stroke-linejoin="round" stroke-linecap="round"><polyline points="0.8,21.2 27.6,1.8 55.6,21.4" stroke-width="1.4"/><path d="M4.3 25.5 L27.6 7.7 L50.6 24.4 V43.4 H33 V28.8 H21 V43.4 H4.3 Z" stroke-width="2"/><path d="M45.8 17.5 V4.4 H52.6 V20.4" stroke-width="2"/></g></svg>
<div class="t" style="left:2732.30px;top:625.42px;font-size:27.14px;line-height:27.14px;color:#000;letter-spacing:-0.143px;">Add New Activity</div>
<div class="t" style="left:2732.30px;top:687.39px;font-size:26.83px;line-height:26.83px;color:#000;letter-spacing:-0.129px;">Link Activities</div>
</div></body></html>
